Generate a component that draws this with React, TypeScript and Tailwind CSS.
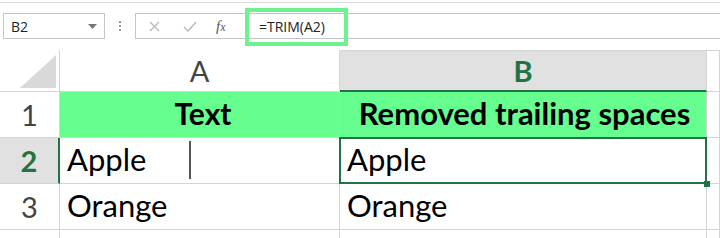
import React from 'react';

const GRID = 'border-[#d4d4d4]';

const ColHeader: React.FC<{ label?: string; selected?: boolean; top?: boolean }> = ({ label, selected, top }) => (
  <div
    className={`flex items-center justify-center border-r ${GRID} ${top ? 'border-t' : 'border-t border-t-transparent'} ${
      selected
        ? 'bg-[#e1e1e1] border-b-2 border-b-[#217346] font-bold text-[#217346]'
        : 'border-b text-[#444]'
    }`}
  >
    {label}
  </div>
);

const RowHeader: React.FC<{ n?: number; selected?: boolean }> = ({ n, selected }) => (
  <div
    className={`flex items-center justify-center border-b ${GRID} ${
      selected
        ? 'bg-[#e1e1e1] border-r-2 border-r-[#217346] font-bold text-[#217346]'
        : 'border-r text-[#444]'
    }`}
  >
    {n}
  </div>
);

const Cell: React.FC<{ children?: React.ReactNode; className?: string }> = ({ children, className = '' }) => (
  <div className={`relative flex items-end border-r border-b ${GRID} pl-[7px] pb-[1px] text-black ${className}`}>
    {children}
  </div>
);

export default function App() {
  return (
    <div className="w-[720px] h-[238px] overflow-hidden bg-white font-['Lato',sans-serif]">
      {/* Formula bar */}
      <div className="h-[50px] pt-[2px]">
        <div className="border-t border-[#dcdcdc] h-[48px] flex items-start pt-[10px] font-['Open_Sans',sans-serif] text-[14px] text-[#222]">
          <div className="ml-[3px] w-[102px] h-[26px] border border-[#c6c6c6] flex items-center justify-between pl-[7px] pr-[7px]">
            <span>B2</span>
            <svg width="9" height="5" viewBox="0 0 9 5">
              <path d="M0 0h9L4.5 5z" fill="#777" />
            </svg>
          </div>
          <div className="w-[30px] h-[26px] flex flex-col items-center justify-center gap-[2px]">
            <span className="w-[2px] h-[2px] bg-[#999]" />
            <span className="w-[2px] h-[2px] bg-[#999]" />
            <span className="w-[2px] h-[2px] bg-[#999]" />
          </div>
          <div className="flex-1 h-[26px] border border-[#c6c6c6] border-r-0 flex items-center">
            <div className="w-[109px] flex items-center">
              <svg className="ml-[13px]" width="11" height="11" viewBox="0 0 11 11">
                <path d="M1 1l9 9M10 1l-9 9" stroke="#b8b8b8" strokeWidth="1.3" />
              </svg>
              <svg className="ml-[23px]" width="14" height="11" viewBox="0 0 14 11">
                <path d="M1 6l4 4 8-9" stroke="#b8b8b8" strokeWidth="1.4" fill="none" />
              </svg>
              <span className="ml-[19px] italic font-['Liberation_Serif',serif] text-[15px] text-[#555] leading-none">
                f<span className="text-[12px]">x</span>
              </span>
            </div>
            <div className="relative h-full flex items-center pl-[14px]">
              <span>=TRIM(A2)</span>
              <div className="absolute left-0 top-[-6px] w-[103px] h-[38px] border-[4px] border-[#6ef28f]" />
            </div>
          </div>
        </div>
      </div>

      {/* Grid */}
      <div className="grid grid-cols-[60px_280px_367px_13px] grid-rows-[42px_46px_46px_46px_20px] text-[29px]">
        <div className={`relative border-r border-b ${GRID}`}>
          <svg className="absolute left-[20px] top-[5px]" width="36" height="33" viewBox="0 0 36 33">
            <path d="M36 0v33H0z" fill="#d9d9d9" />
          </svg>
        </div>
        <ColHeader label="A" />
        <ColHeader label="B" selected top />
        <ColHeader top />

        <RowHeader n={1} />
        <Cell className="bg-[#66ff8f] justify-center font-bold pl-0 text-[30px]">Text</Cell>
        <Cell className="bg-[#66ff8f] justify-center font-bold pl-0 pr-[4px] text-[31px]">Removed trailing spaces</Cell>
        <Cell />

        <RowHeader n={2} selected />
        <Cell className="text-[31px]">
          Apple
          <span className="absolute left-[129px] top-[3px] w-[2px] h-[38px] bg-[#555]" />
        </Cell>
        <Cell className="text-[31px] z-10">
          Apple
          <div className="absolute inset-[-1px] border-2 border-[#217346]" />
          <div className="absolute right-[-4px] bottom-[-4px] w-[6px] h-[6px] bg-[#217346]" />
        </Cell>
        <Cell />

        <RowHeader n={3} />
        <Cell className="text-[31px]">Orange</Cell>
        <Cell className="text-[31px]">Orange</Cell>
        <Cell />

        <RowHeader />
        <Cell />
        <Cell />
        <Cell />
      </div>
    </div>
  );
}
